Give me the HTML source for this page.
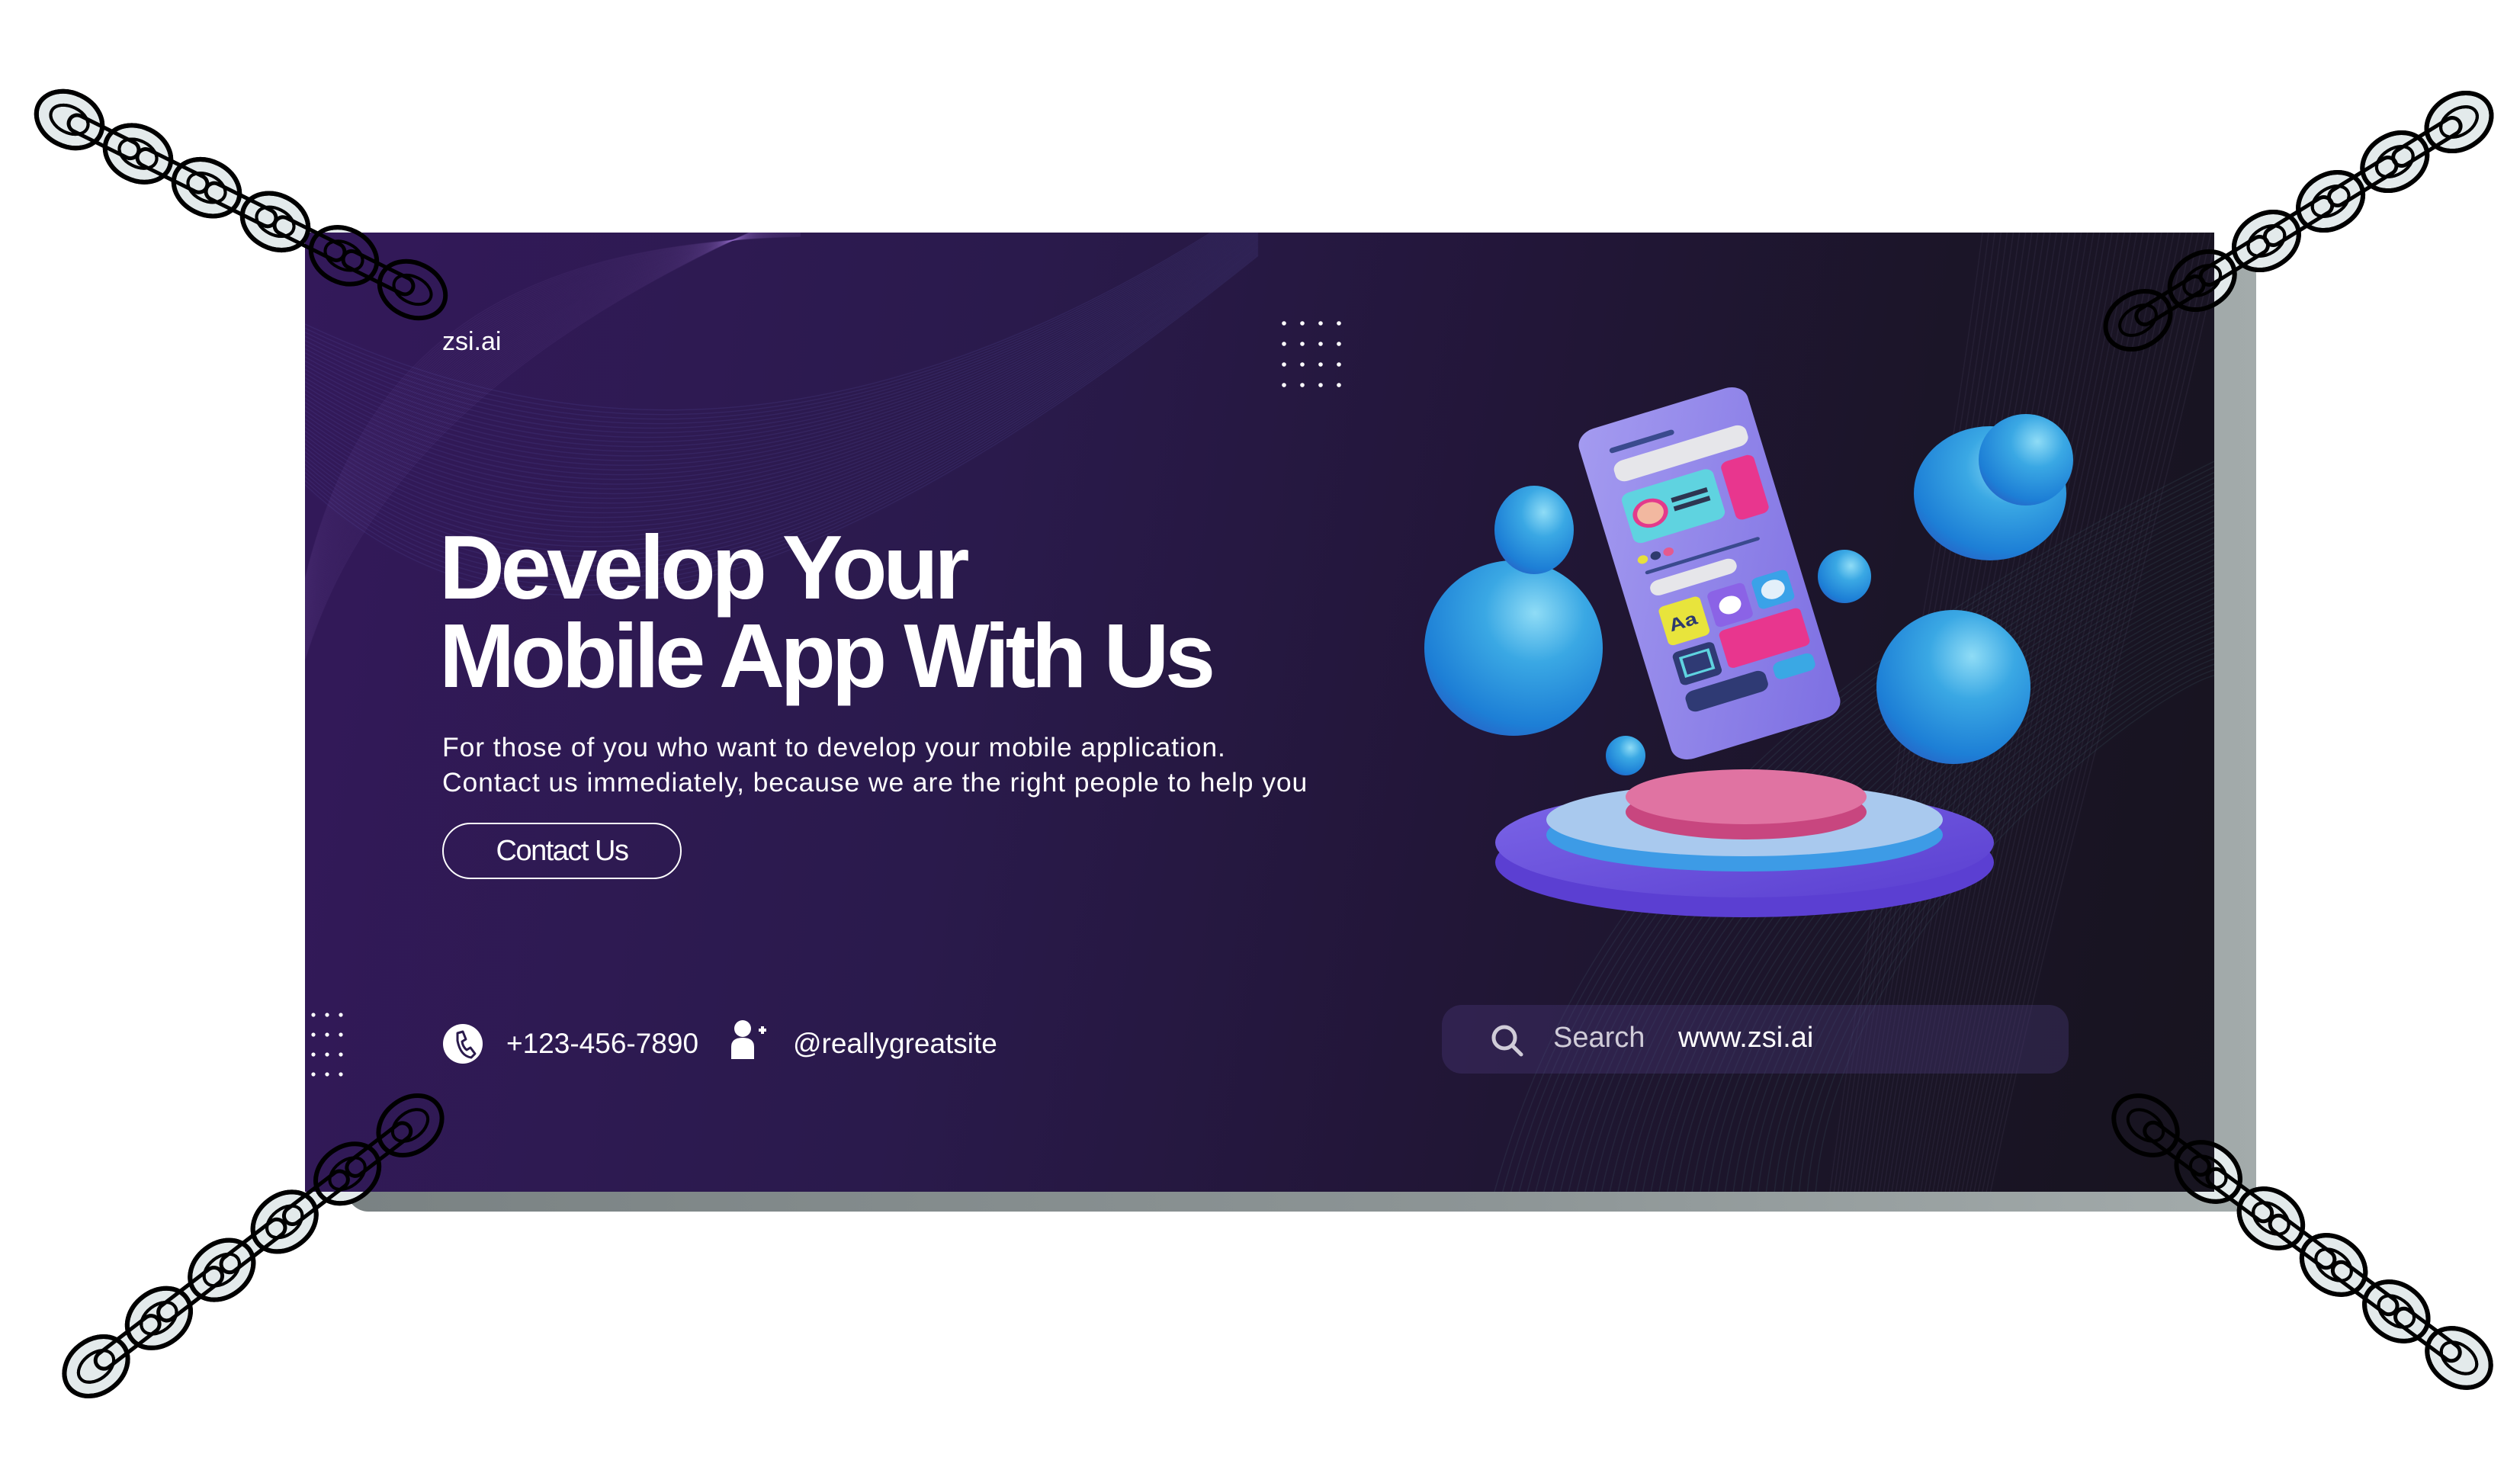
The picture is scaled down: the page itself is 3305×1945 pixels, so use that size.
<!DOCTYPE html>
<html><head><meta charset="utf-8">
<style>
html,body{margin:0;padding:0;background:#fff;}
body{width:3305px;height:1945px;position:relative;overflow:hidden;font-family:"Liberation Sans",sans-serif;}
.abs{position:absolute;}
#shadow{left:455px;top:333px;width:2504px;height:1256px;background:linear-gradient(90deg,#7a8283,#8d9596 60%,#a3abab);border-radius:28px;}
#banner{left:400px;top:305px;width:2504px;height:1258px;overflow:hidden;
 background:linear-gradient(100deg,#33195a 0%,#2a1a4c 35%,#221638 60%,#1b1528 80%,#17141f 100%);}
.t{color:#fff;position:absolute;white-space:nowrap;}
</style></head><body>
<div id="shadow" class="abs"></div>
<svg class="abs" id="chUnder" style="left:0;top:0" width="3305" height="1945"></svg>
<div id="banner" class="abs">
  <svg class="abs" id="waves" style="left:0;top:0" width="2504" height="1258"></svg>
  <svg class="abs" style="left:0;top:0" width="2504" height="1258">
    <defs>
      <radialGradient id="ball" cx="0.62" cy="0.3" r="0.8">
        <stop offset="0" stop-color="#8fdcf6"/><stop offset="0.35" stop-color="#3aa8e4"/><stop offset="0.8" stop-color="#1d7fd6"/><stop offset="1" stop-color="#2a5fc4"/>
      </radialGradient>
      <linearGradient id="pod1" x1="0" y1="0" x2="1" y2="1"><stop offset="0" stop-color="#7c66e8"/><stop offset="1" stop-color="#5a3fd0"/></linearGradient>
      <linearGradient id="phoneg" x1="0" y1="0" x2="1" y2="1"><stop offset="0" stop-color="#a49bf0"/><stop offset="1" stop-color="#7d6fe2"/></linearGradient>
    </defs>
    <!-- podium -->
    <ellipse cx="1888" cy="826" rx="327" ry="72" fill="#5b3fd2"/>
    <ellipse cx="1888" cy="800" rx="327" ry="72" fill="url(#pod1)"/>
    <ellipse cx="1888" cy="790" rx="260" ry="48" fill="#3d9be6"/>
    <ellipse cx="1888" cy="770" rx="260" ry="48" fill="#a9c9ee"/>
    <ellipse cx="1890" cy="760" rx="158" ry="36" fill="#c8467f"/>
    <ellipse cx="1890" cy="740" rx="158" ry="36" fill="#e073a2"/>
    <!-- balls -->
    <ellipse cx="1585" cy="545" rx="117" ry="115" fill="url(#ball)"/>
    <ellipse cx="1612" cy="390" rx="52" ry="58" fill="url(#ball)"/>
    <ellipse cx="2210" cy="342" rx="100" ry="88" fill="url(#ball)"/>
    <ellipse cx="2257" cy="298" rx="62" ry="60" fill="url(#ball)"/>
    <circle cx="2162" cy="596" r="101" fill="url(#ball)"/>
    <circle cx="2019" cy="451" r="35" fill="url(#ball)"/>
    <circle cx="1732" cy="686" r="26" fill="url(#ball)"/>
    <!-- phone -->
    <g transform="translate(1842,447) rotate(-17) scale(0.98,0.78)">
      <rect x="-118" y="-290" width="236" height="580" rx="26" fill="url(#phoneg)"/>
      <rect x="-80" y="-250" width="90" height="9" rx="4" fill="#3a4a8e"/>
      <rect x="-82" y="-225" width="185" height="36" rx="14" fill="#e6e6ea"/>
      <rect x="-84" y="-170" width="128" height="88" rx="12" fill="#5fd3e0"/>
      <circle cx="-52" cy="-126" r="24" fill="#e33a8c"/><circle cx="-52" cy="-126" r="18" fill="#f2b8a0"/>
      <rect x="-20" y="-140" width="50" height="8" fill="#2d3550"/><rect x="-20" y="-125" width="50" height="8" fill="#2d3550"/>
      <rect x="56" y="-172" width="46" height="102" rx="10" fill="#e8368e"/>
      <circle cx="-80" cy="-55" r="7" fill="#e7e03c"/><circle cx="-62" cy="-55" r="7" fill="#2d3a6e"/><circle cx="-44" cy="-55" r="7" fill="#e55a8e"/>
      <rect x="-82" y="-35" width="160" height="6" rx="3" fill="#3a4a8e"/>
      <rect x="-82" y="-15" width="120" height="26" rx="12" fill="#e6e6ea"/>
      <rect x="-80" y="30" width="58" height="68" rx="8" fill="#e8e43c"/>
      <text x="-72" y="75" font-size="30" font-weight="bold" fill="#2d3a6e" font-family="Liberation Sans">Aa</text>
      <rect x="-12" y="30" width="52" height="62" rx="8" fill="#8b63e6"/><circle cx="14" cy="61" r="15" fill="#fff"/>
      <rect x="50" y="30" width="50" height="54" rx="8" fill="#3aa2e8"/><circle cx="75" cy="57" r="16" fill="#e3f0fa"/>
      <rect x="-80" y="110" width="58" height="58" rx="8" fill="#2f3a74"/><rect x="-70" y="122" width="38" height="32" fill="none" stroke="#5fd3e0" stroke-width="4"/>
      <rect x="-12" y="98" width="114" height="66" rx="8" fill="#e8368e"/>
      <rect x="-80" y="180" width="112" height="36" rx="12" fill="#2f3a74"/>
      <rect x="44" y="176" width="56" height="30" rx="10" fill="#3aa8e4"/>
    </g>
  </svg>
  <!-- dots -->
  <svg class="abs" style="left:1280px;top:115px" width="90" height="90">
    <g fill="#fff">
      <circle cx="4" cy="4" r="2.8"/><circle cx="28" cy="4" r="2.8"/><circle cx="52" cy="4" r="2.8"/><circle cx="76" cy="4" r="2.8"/>
      <circle cx="4" cy="31" r="2.8"/><circle cx="28" cy="31" r="2.8"/><circle cx="52" cy="31" r="2.8"/><circle cx="76" cy="31" r="2.8"/>
      <circle cx="4" cy="58" r="2.8"/><circle cx="28" cy="58" r="2.8"/><circle cx="52" cy="58" r="2.8"/><circle cx="76" cy="58" r="2.8"/>
      <circle cx="4" cy="85" r="2.8"/><circle cx="28" cy="85" r="2.8"/><circle cx="52" cy="85" r="2.8"/><circle cx="76" cy="85" r="2.8"/>
    </g>
  </svg>
  <svg class="abs" style="left:7px;top:1022px" width="60" height="90">
    <g fill="#fff">
      <circle cx="4" cy="4" r="2.6"/><circle cx="22" cy="4" r="2.6"/><circle cx="40" cy="4" r="2.6"/>
      <circle cx="4" cy="30" r="2.6"/><circle cx="22" cy="30" r="2.6"/><circle cx="40" cy="30" r="2.6"/>
      <circle cx="4" cy="56" r="2.6"/><circle cx="22" cy="56" r="2.6"/><circle cx="40" cy="56" r="2.6"/>
      <circle cx="4" cy="82" r="2.6"/><circle cx="22" cy="82" r="2.6"/><circle cx="40" cy="82" r="2.6"/>
    </g>
  </svg>
  <div class="t" style="left:180px;top:124px;font-size:34px;">zsi.ai</div>
  <div class="t" style="left:176px;top:382px;font-size:119px;font-weight:bold;letter-spacing:-5.5px;line-height:116px;">Develop Your<br>Mobile App With Us</div>
  <div class="t" style="left:180px;top:652px;font-size:35.5px;letter-spacing:0.9px;line-height:46px;">For those of you who want to develop your mobile application.<br>Contact us immediately, because we are the right people to help you</div>
  <div class="abs" style="left:180px;top:774px;width:314px;height:74px;border:2px solid #fff;border-radius:38px;box-sizing:border-box;"></div>
  <div class="t" style="left:180px;top:790px;width:314px;text-align:center;font-size:38px;letter-spacing:-1.5px;">Contact Us</div>
  <!-- contacts -->
  <svg class="abs" style="left:180px;top:1037px" width="54" height="54"><circle cx="27" cy="27" r="26" fill="#fff"/>
    <path d="M20 13 l7 -2 l4 10 l-5 3 q1 7 6 11 l5 -3 l6 8 l-5 5 q-14 -2 -18 -22 z" fill="none" stroke="#2a1a4c" stroke-width="3" stroke-linejoin="round"/></svg>
  <div class="t" style="left:264px;top:1043px;font-size:37px;">+123-456-7890</div>
  <svg class="abs" style="left:558px;top:1032px" width="48" height="52"><circle cx="16" cy="12" r="11" fill="#fff"/><path d="M1 52 v-16 q0 -12 15 -12 q15 0 15 12 v16 z" fill="#fff"/><path d="M37 14 h10 M42 9 v10" stroke="#fff" stroke-width="4"/></svg>
  <div class="t" style="left:640px;top:1043px;font-size:37px;">@reallygreatsite</div>
  <!-- search -->
  <div class="abs" style="left:1491px;top:1013px;width:822px;height:90px;border-radius:26px;background:rgba(80,60,130,0.33);"></div>
  <svg class="abs" style="left:1553px;top:1036px" width="50" height="50"><circle cx="20" cy="20" r="14" fill="none" stroke="#d0ccd8" stroke-width="5"/><path d="M30 30 l12 12" stroke="#d0ccd8" stroke-width="5" stroke-linecap="round"/></svg>
  <div class="t" style="left:1637px;top:1035px;font-size:38px;color:#d0ccd8;">Search</div>
  <div class="t" style="left:1801px;top:1035px;font-size:38px;">www.zsi.ai</div>
</div>
<svg class="abs" id="chOver" style="left:0;top:0" width="3305" height="1945"></svg>
<script>
(function(){
 var NS="http://www.w3.org/2000/svg";
 function el(p,n,a){var e=document.createElementNS(NS,n);for(var k in a)e.setAttribute(k,a[k]);p.appendChild(e);return e;}
 var chains=[[91,157,541,380],[3225,160,2804,420],[538,1476,126,1792],[2814,1476,3225,1781]];
 var U=document.getElementById('chUnder'),O=document.getElementById('chOver');
 chains.forEach(function(c){
   var n=6,dx=(c[2]-c[0])/(n-1),dy=(c[3]-c[1])/(n-1),ang=Math.atan2(dy,dx)*180/Math.PI;
   [U,O].forEach(function(s,si){
     var fill=si==0?"#e3eaeb":"none";
     for(var i=0;i<n-1;i++){
       var x=c[0]+dx*(i+0.5),y=c[1]+dy*(i+0.5);
       el(s,'rect',{x:-50,y:-11,width:100,height:22,rx:11,fill:fill,stroke:"#000","stroke-width":5,transform:"translate("+x+","+y+") rotate("+ang+")"});
     }
     for(var i=0;i<n;i++){
       var x=c[0]+dx*i,y=c[1]+dy*i;
       var g=el(s,'g',{transform:"translate("+x+","+y+") rotate("+ang+")"});
       el(g,'ellipse',{cx:0,cy:0,rx:45,ry:35,fill:fill,stroke:"#000","stroke-width":6});
       el(g,'ellipse',{cx:0,cy:0,rx:26,ry:17,fill:"none",stroke:"#000","stroke-width":4});
     }
   });
 });
 var W=document.getElementById('waves');
 for(var i=0;i<40;i++){
   var o=i*9;
   el(W,'path',{d:"M0 "+(120+o*0.6)+" C 300 "+(260+o)+", 700 "+(330+o*0.4)+", 1250 "+(-40+o*0.2),fill:"none",stroke:"rgba(110,110,200,0.13)","stroke-width":1.5});
   el(W,'path',{d:"M0 "+(560-o*0.3)+" C 80 "+(300-o*0.5)+", 300 "+(120-o*0.3)+", 650 "+(-30+o*0.1),fill:"none",stroke:"rgba(150,110,210,0.08)","stroke-width":1.5});
   el(W,'path',{d:"M"+(1560+o*1.2)+" 1258 C "+(1660+o)+" 900, "+(1900+o*1.5)+" 600, "+(2504)+" "+(300+o*0.8),fill:"none",stroke:"rgba(90,150,160,0.12)","stroke-width":1.5});
   el(W,'path',{d:"M"+(2000+o*0.6)+" 1258 C "+(2060+o*0.7)+" 800, "+(2150+o*0.8)+" 400, "+(2200+o*0.9)+" 0",fill:"none",stroke:"rgba(160,150,200,0.08)","stroke-width":1.5});
 }
})();
</script>
</body></html>
